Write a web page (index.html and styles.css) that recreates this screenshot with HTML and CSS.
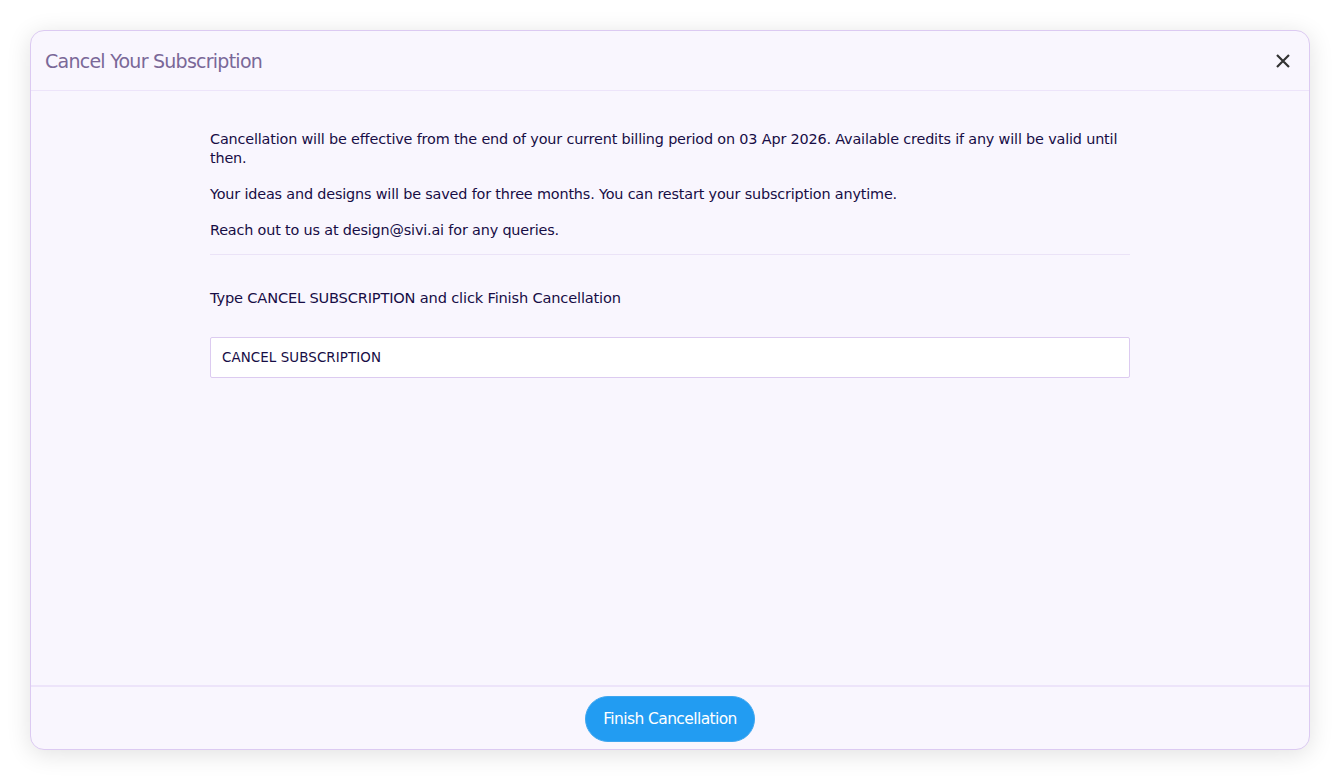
FILE: index.html
```html
<!DOCTYPE html>
<html>
<head>
<meta charset="utf-8">
<link rel="stylesheet" href="styles.css">
</head>
<body>
<div class="modal">
  <div class="modal-header">
    <h1 class="title">Cancel Your Subscription</h1>
    <button class="close" aria-label="Close">
      <svg width="16" height="16" viewBox="0 0 16 16"><path d="M2 2 L14 14 M14 2 L2 14" stroke="#333" stroke-width="2.2" stroke-linecap="butt" fill="none"/></svg>
    </button>
  </div>
  <div class="modal-body">
    <div class="content">
      <div class="notes">
        <p class="para">Cancellation will be effective from the end of your current billing period on 03 Apr 2026. Available credits if any will be valid until then.</p>
        <p class="para">Your ideas and designs will be saved for three months. You can restart your subscription anytime.</p>
        <p class="para">Reach out to us at design@sivi.ai for any queries.</p>
      </div>
      <div class="divider"></div>
      <p class="label">Type CANCEL SUBSCRIPTION and click Finish Cancellation</p>
      <input class="field" type="text" value="CANCEL SUBSCRIPTION">
    </div>
  </div>
  <div class="modal-footer">
    <button class="primary">Finish Cancellation</button>
  </div>
</div>
</body>
</html>
```
FILE: styles.css
```css
html, body {
  margin: 0;
  padding: 0;
  background: #ffffff;
  font-family: "DejaVu Sans", Verdana, sans-serif;
}
body {
  padding: 30px;
  height: 780px;
  box-sizing: border-box;
}
.modal {
  height: 720px;
  box-sizing: border-box;
  border: 1px solid #dccaf2;
  border-radius: 14px;
  background: #f9f6fe;
  box-shadow: 0 4px 24px rgba(0, 0, 0, 0.12);
  display: flex;
  flex-direction: column;
  overflow: hidden;
}
.modal-header {
  height: 60px;
  flex: none;
  box-sizing: border-box;
  border-bottom: 1px solid #ede4fa;
  display: flex;
  align-items: center;
  justify-content: space-between;
  padding: 0 14px 0 14px;
}
.title {
  margin: 0;
  font-size: 19px;
  font-weight: normal;
  color: #7a6898;
  letter-spacing: -0.75px;
}
.close {
  border: 0;
  background: none;
  padding: 0;
  width: 24px;
  height: 24px;
  display: flex;
  align-items: center;
  justify-content: center;
  cursor: pointer;
}
.modal-body {
  flex: 1;
  display: flex;
  justify-content: center;
}
.content {
  width: 920px;
  padding-top: 39px;
}
.notes {
  display: flex;
  flex-direction: column;
  gap: 17px;
}
.para {
  margin: 0;
  font-size: 14.4px;
  line-height: 19px;
  color: #170d45;
  letter-spacing: -0.17px;
}
.divider {
  height: 1px;
  background: #ebe3f7;
  margin-top: 14px;
}
.label {
  margin: 33px 0 0 0;
  font-size: 14.6px;
  line-height: 19px;
  color: #170d45;
  letter-spacing: -0.17px;
}
.field {
  display: block;
  width: 100%;
  box-sizing: border-box;
  height: 41px;
  margin-top: 30px;
  border: 1px solid #dccbf0;
  border-radius: 2px;
  background: #ffffff;
  padding: 0 11px;
  font-family: "DejaVu Sans", Verdana, sans-serif;
  font-size: 13.4px;
  color: #170d45;
  letter-spacing: 0.1px;
  outline: none;
}
.modal-footer {
  height: 64px;
  flex: none;
  box-sizing: border-box;
  border-top: 2px solid #ede4fa;
  display: flex;
  align-items: center;
  justify-content: center;
}
.primary {
  width: 170px;
  height: 46px;
  margin-top: 1px;
  border: 1px solid #3ea6ef;
  border-radius: 23px;
  background: #229cf2;
  color: #ffffff;
  font-family: "DejaVu Sans", Verdana, sans-serif;
  font-size: 15.5px;
  letter-spacing: -0.6px;
  cursor: pointer;
}
```
